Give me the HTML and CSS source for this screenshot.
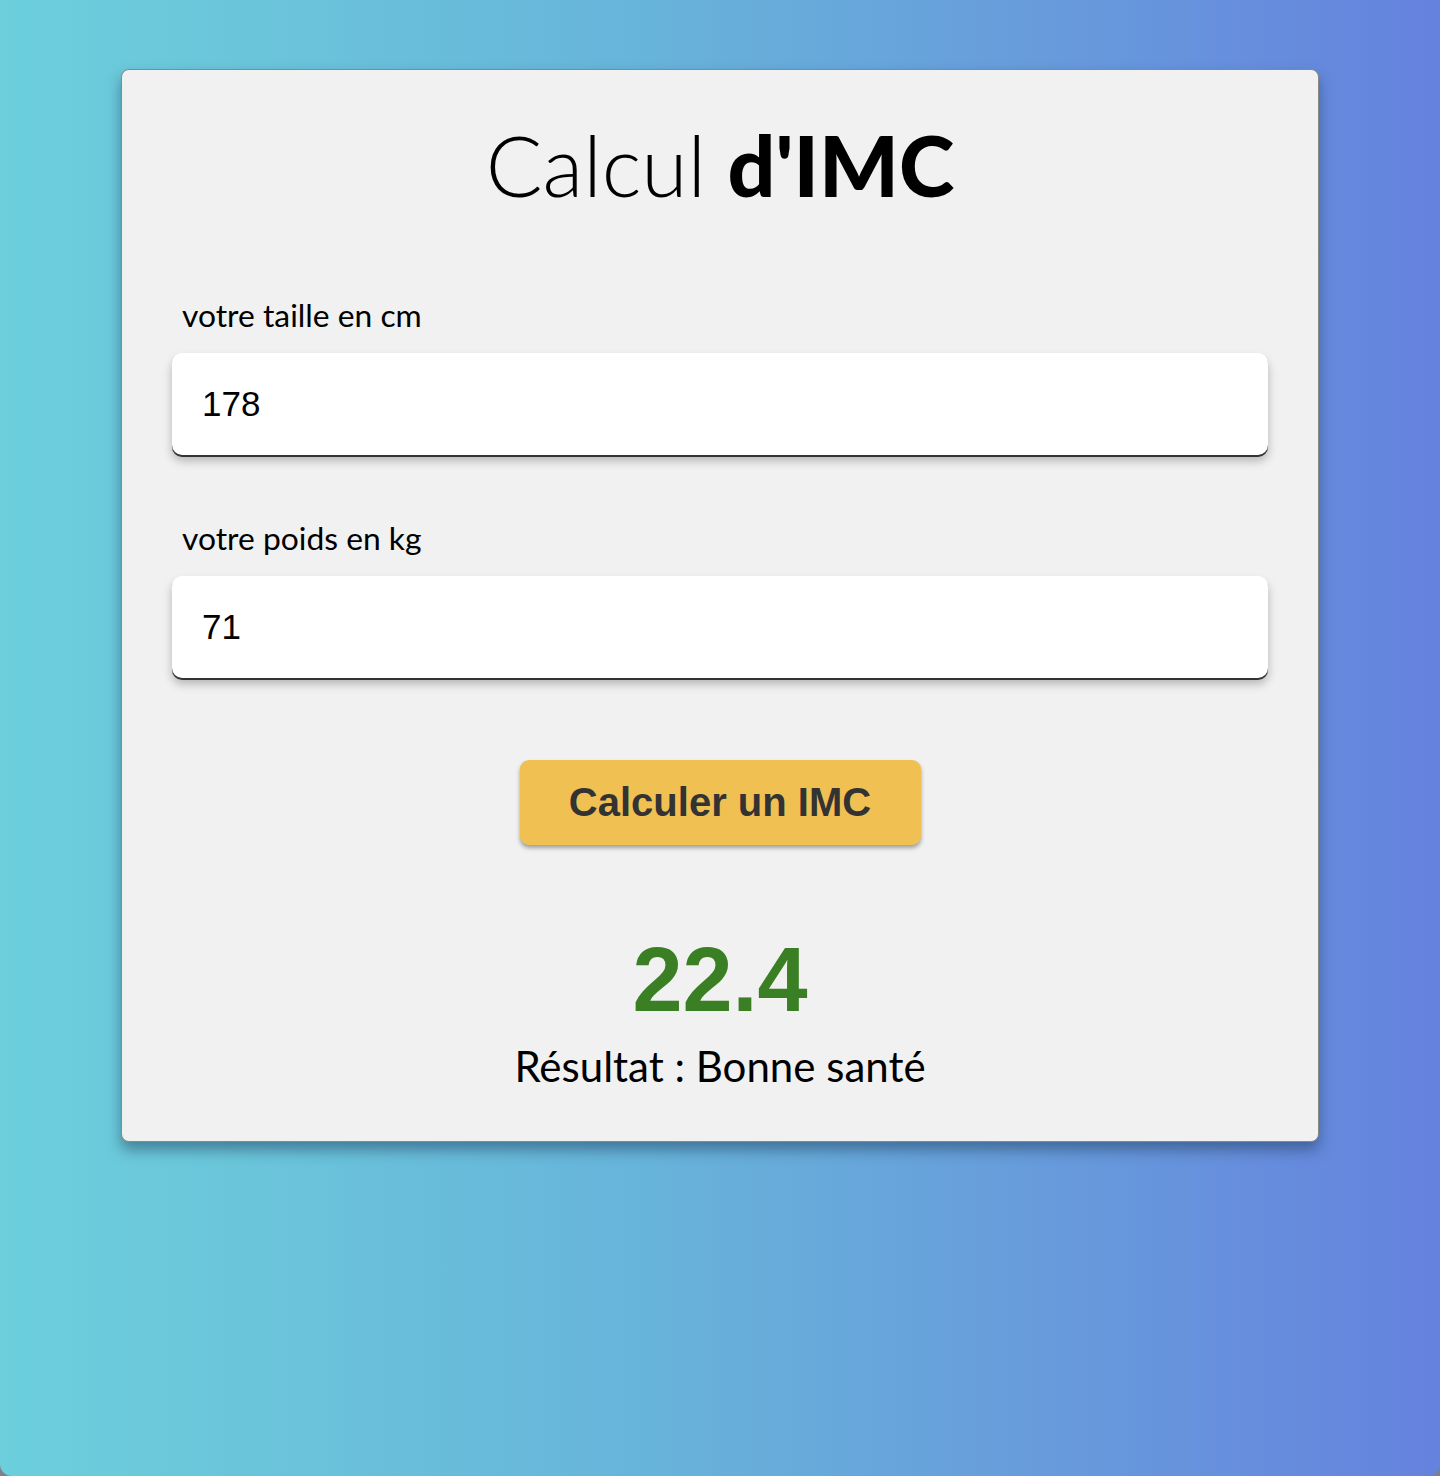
FILE: index.html
```html
<!DOCTYPE html>
<html lang="fr">
<head>
<meta charset="utf-8">
<title>Calcul d'IMC</title>
<link rel="stylesheet" href="styles.css">
</head>
<body>
<div class="window">
  <main class="card">
    <h1 class="title"><span class="light">Calcul</span> <strong>d'IMC</strong></h1>
    <form class="form">
      <label class="label" for="taille">votre taille en cm</label>
      <input class="field" id="taille" type="text" value="178">
      <label class="label label-second" for="poids">votre poids en kg</label>
      <input class="field" id="poids" type="text" value="71">
      <button class="btn" type="button">Calculer un IMC</button>
    </form>
    <div class="value">22.4</div>
    <p class="result">Résultat : Bonne santé</p>
  </main>
</div>
</body>
</html>
```

FILE: styles.css
```css
html {
  background: #7c818d;
}
body {
  margin: 0;
}
.window {
  min-height: 1476px;
  box-sizing: border-box;
  padding-top: 69px;
  background: linear-gradient(90deg, #6ccfdb 0%, #67b4da 45%, #6799dc 75%, #6582de 100%);
  border-radius: 0 0 12px 12px;
  overflow: hidden;
}
.card {
  width: 1198px;
  box-sizing: border-box;
  margin: 0 auto;
  background: #f1f1f1;
  border: 1.5px solid #888;
  border-radius: 8px;
  box-shadow: 0 8px 14px rgba(30, 60, 90, 0.5);
  padding: 45px 50px 50px;
  display: flex;
  flex-direction: column;
  align-items: center;
}
.title {
  margin: 0;
  font-family: Lato, "Open Sans", sans-serif;
  font-size: 84px;
  line-height: 100px;
  font-weight: 400;
  color: #000;
}
.title .light {
  font-weight: 300;
}
.title strong {
  font-weight: 900;
}
.form {
  align-self: stretch;
  display: flex;
  flex-direction: column;
  align-items: center;
  margin-top: 82px;
}
.label {
  align-self: stretch;
  margin-left: 10px;
  font-family: Lato, sans-serif;
  font-size: 31.8px;
  line-height: 36px;
  color: #000;
}
.label-second {
  margin-top: 65px;
}
.field {
  align-self: stretch;
  margin-top: 20px;
  height: 102px;
  box-sizing: border-box;
  border: none;
  border-radius: 10px;
  background: #fff;
  padding: 0 30px;
  font-family: "Liberation Sans", Arial, sans-serif;
  font-size: 35px;
  color: #000;
  box-shadow: 0 2px 0 #333, 0 6px 10px rgba(0, 0, 0, 0.25);
  outline: none;
}
.btn {
  margin-top: 82px;
  width: 401px;
  height: 85px;
  border: none;
  border-radius: 9px;
  background: #f0c053;
  font-family: "Liberation Sans", Arial, sans-serif;
  font-weight: 700;
  font-size: 40px;
  color: #333;
  box-shadow: 0 3px 4px rgba(0, 0, 0, 0.35);
  cursor: pointer;
}
.value {
  margin-top: 90px;
  font-family: "Liberation Sans", Arial, sans-serif;
  font-weight: 700;
  font-size: 90px;
  line-height: 90px;
  color: #3a7f24;
}
.result {
  margin: 16px 0 0;
  font-family: Lato, sans-serif;
  font-size: 42px;
  line-height: 50px;
  color: #000;
}
```
